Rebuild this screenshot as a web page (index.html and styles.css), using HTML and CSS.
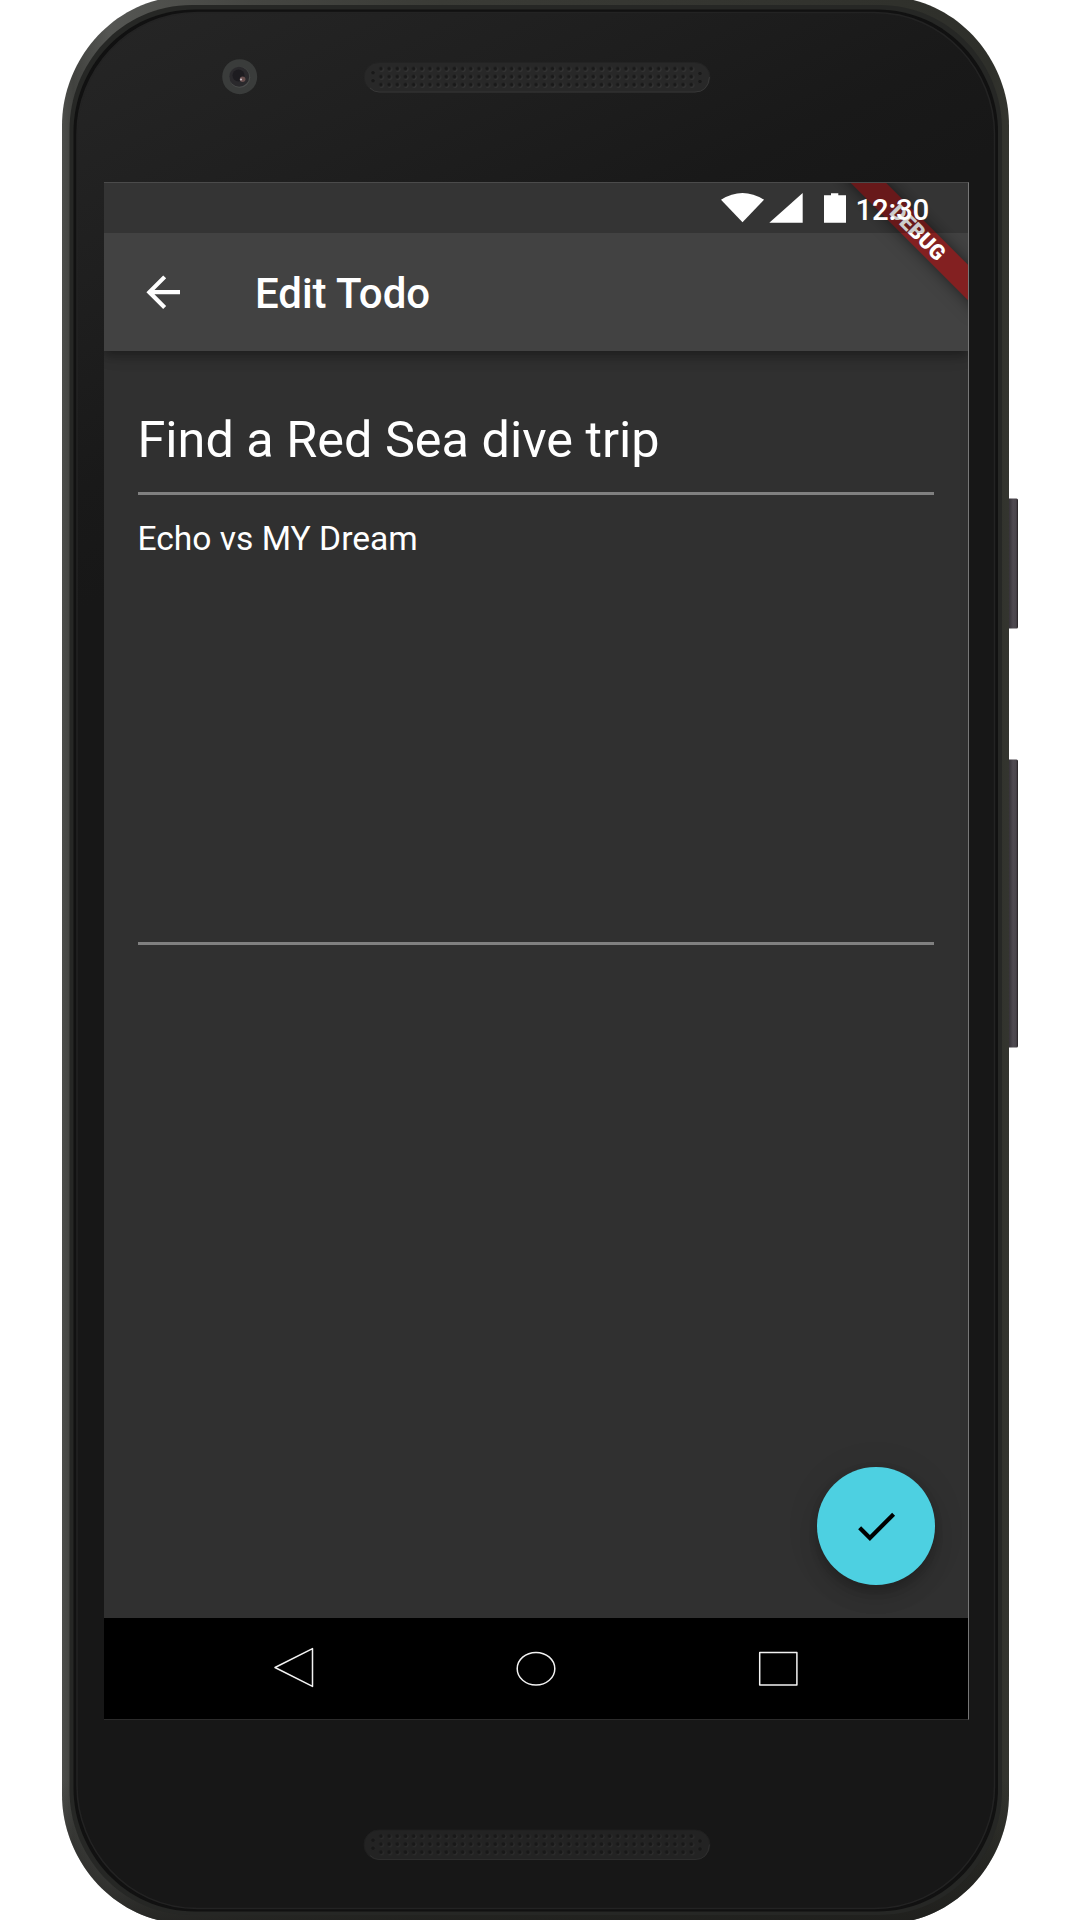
FILE: index.html
```html
<!DOCTYPE html>
<html lang="en">
<head>
<meta charset="utf-8">
<title>Edit Todo</title>
<link rel="stylesheet" href="styles.css">
</head>
<body>
<div class="device">
  <svg class="shell" viewBox="0 0 1080 1920" aria-hidden="true">
    <defs>
      <linearGradient id="metal" x1="62" x2="1009" y1="0" y2="0" gradientUnits="userSpaceOnUse">
        <stop offset="0" stop-color="#4c4d4a"/><stop offset=".012" stop-color="#41423f"/><stop offset=".05" stop-color="#555653"/><stop offset=".2" stop-color="#454642"/><stop offset=".4" stop-color="#3a3b36"/><stop offset=".98" stop-color="#2e2f2a"/><stop offset="1" stop-color="#34352f"/>
      </linearGradient>
      <linearGradient id="shade" x1="0" x2="0" y1="1780" y2="1920" gradientUnits="userSpaceOnUse">
        <stop offset="0" stop-color="#1c1c1a" stop-opacity="0"/><stop offset="1" stop-color="#1c1c1a" stop-opacity=".8"/>
      </linearGradient>
      <linearGradient id="glass" x1="80" y1="10" x2="320" y2="490" gradientUnits="userSpaceOnUse">
        <stop offset="0" stop-color="#262626"/><stop offset=".45" stop-color="#1f1f1f"/><stop offset=".8" stop-color="#191919"/><stop offset="1" stop-color="#171717"/>
      </linearGradient>
      <linearGradient id="key" x1="1009" x2="1018" y1="0" y2="0" gradientUnits="userSpaceOnUse">
        <stop offset="0" stop-color="#363238"/><stop offset=".45" stop-color="#4f4a51"/><stop offset=".8" stop-color="#4a454b"/><stop offset="1" stop-color="#211d20"/>
      </linearGradient>
      <pattern id="holes" x="377" y="64.7" width="8.166" height="8" patternUnits="userSpaceOnUse">
        <circle cx="4.6" cy="4.6" r="2.3" fill="#3a3a3a"/><circle cx="4" cy="4" r="2" fill="#191919"/>
      </pattern>
      <g id="speaker">
        <rect x="364" y="62.5" width="346" height="29.5" rx="14.7" fill="#282828" stroke="#232323"/>
        <path d="M370 88q4 4 9 4h316q13 0 14.500-15" fill="none" stroke="#383838"/>
        <rect x="377" y="64.700" width="318.500" height="24" fill="url(#holes)"/>
        <g fill="#191919" stroke="#303030" stroke-width=".6"><circle cx="373" cy="72.700" r="2.200"/><circle cx="373" cy="80.700" r="2.200"/><circle cx="700" cy="73.500" r="2.200"/><circle cx="700" cy="81.500" r="2.200"/></g>
      </g>
    </defs>
    <rect x="1005" y="498.500" width="13" height="130" rx="1.500" fill="url(#key)"/>
    <rect x="1005" y="759.500" width="13" height="288" rx="1.500" fill="url(#key)"/>
    <path d="M62 125C62 62 112-4 190-4H881C959-4 1009 62 1009 125V1795C1009 1858 959 1924 881 1924H190C112 1924 62 1858 62 1795Z" fill="url(#metal)"/>
    <path d="M62 125C62 62 112-4 190-4H881C959-4 1009 62 1009 125V1795C1009 1858 959 1924 881 1924H190C112 1924 62 1858 62 1795Z" fill="url(#shade)"/>
    <path d="M69.500 130C69.500 65 120 5 192 5H879C951 5 1002 65 1002 130V1790C1002 1855 951 1915 879 1915H192C120 1915 69.500 1855 69.500 1790Z" fill="#262725"/>
    <path d="M73.500 132C73.500 69 123 9.500 195 9.500H877C948 9.500 998 69 998 132V1788C998 1851 948 1911.500 877 1911.500H195C123 1911.500 73.500 1851 73.500 1788Z" fill="#111111"/>
    <path d="M77 134C77 72 126 12.500 198 12.500H874C945 12.500 994.500 72 994.500 134V1786C994.500 1848 945 1908.500 874 1908.500H198C126 1908.500 77 1848 77 1786Z" fill="url(#glass)" stroke="#232323" stroke-width="1.500"/>
    <circle cx="239.700" cy="76.700" r="17.500" fill="#3a3c3b"/>
    <circle cx="239.700" cy="77.300" r="10.500" fill="#4b4d4c"/>
    <circle cx="239.200" cy="76.700" r="10" fill="#2a292c"/>
    <circle cx="238.500" cy="75.500" r="6" fill="#1d1c20"/>
    <circle cx="242.600" cy="79.200" r="2.800" fill="#69504f"/>
    <circle cx="241" cy="79.500" r="1.100" fill="#c5bcc4"/>
    <use href="#speaker"/>
    <use href="#speaker" y="1767.500" opacity=".72"/>
  </svg>

  <main class="screen">
    <div class="app">
      <header class="top">
        <div class="appbar">
          <svg class="icon" viewBox="0 0 24 24"><path d="M20 11H7.830l5.590-5.590L12 4l-8 8 8 8 1.410-1.410L7.830 13H20v-2z" fill="#fff"/></svg>
          <h1 class="title">Edit Todo</h1>
        </div>
        <div class="banner">DEBUG</div>
        <div class="status">
          <svg class="signals" viewBox="0 0 126 30">
            <path d="M0 6.700Q21.500-6.700 43 6.700L21.500 29.300Z"/>
            <path d="M48.300 29.700H81.700V0Z"/>
            <path d="M103 2.300H110V.3H117.300V2.300H125V29.700H103Z"/>
          </svg>
          <span class="time">12:30</span>
        </div>
      </header>
      <section class="form">
        <div class="field field-task">Find a Red Sea dive trip</div>
        <div class="field field-note">Echo vs MY Dream</div>
      </section>
      <div class="fab">
        <svg class="icon" viewBox="0 0 24 24"><path d="M9 16.170L4.830 12l-1.420 1.410L9 19 21 7l-1.410-1.410z"/></svg>
      </div>
    </div>
    <nav class="nav">
      <svg class="keys" viewBox="0 0 864 101" fill="none" stroke="#f2f2f2" stroke-width="1.500" stroke-linejoin="round">
        <path d="M171 49.500L208.500 30.600V68.400Z"/>
        <ellipse cx="432" cy="50.700" rx="18.800" ry="16.300"/>
        <rect x="655.700" y="34.500" width="37.200" height="32.500"/>
      </svg>
    </nav>
  </main>
</div>
</body>
</html>
```

FILE: styles.css
```css
* { box-sizing: border-box; }

body {
  margin: 0;
  background: #fff;
  font-family: Roboto, "Liberation Sans", sans-serif;
  color: #fff;
}

.device {
  display: grid;
  width: 1080px;
  height: 1920px;
  overflow: hidden;
}

.shell,
.screen { grid-area: 1 / 1; }

.shell {
  width: 1080px;
  height: 1920px;
}

.screen {
  z-index: 1;
  display: flex;
  flex-direction: column;
  width: 865px;
  height: 1538px;
  margin: 182px 0 0 104px;
  border-top: 1px solid #4b4b4b;
  border-right: 1px solid #777;
  border-bottom: 1px solid #2b2b2b;
}

.app {
  position: relative;
  display: flex;
  flex-direction: column;
  flex: 1;
  overflow: hidden;
  background: #303030;
}

.top {
  position: relative;
  height: 168px;
  padding-top: 50px;
  overflow: hidden;
  background: #424242;
}

/* Elevation shadow under the app bar */
.app::before {
  content: "";
  position: absolute;
  top: 0;
  left: 0;
  right: 0;
  height: 168px;
  box-shadow: 0 4px 8px rgba(0, 0, 0, .2), 0 8px 12px rgba(0, 0, 0, .12), 0 2px 20px rgba(0, 0, 0, .1);
}

.appbar {
  display: flex;
  align-items: center;
  gap: 67px;
  height: 118px;
  padding-left: 33.5px;
}

.icon {
  width: 50.4px;
  height: 50.4px;
}

.title {
  margin: 0;
  padding-top: 3px;
  font-size: 42px;
  font-weight: 500;
  line-height: 50px;
}

/* Corner ribbon, turned about its own centre */
.banner {
  position: absolute;
  left: 714px;
  top: 37px;
  width: 200px;
  height: 25px;
  background: #832021;
  box-shadow: 0 0 16px rgba(0, 0, 0, .5);
  font-size: 21.4px;
  font-weight: 900;
  line-height: 25px;
  text-align: center;
  transform: rotate(45deg);
}

.status {
  position: absolute;
  inset: 0 0 auto;
  display: flex;
  align-items: flex-start;
  justify-content: flex-end;
  height: 50px;
  padding: 10px 39px 0 0;
  background: rgba(0, 0, 0, .2);
}

.signals {
  width: 126px;
  height: 30px;
  fill: #fff;
}

.time {
  width: 82px;
  font-size: 29.4px;
  font-weight: 500;
  line-height: 34px;
  letter-spacing: -.2px;
  text-align: right;
}

.form {
  display: flex;
  flex-direction: column;
  padding: 42px 34px 0 33.5px;
}

.field {
  border-bottom: 3px solid #808080;
}

.field-task {
  height: 102px;
  padding-top: 17px;
  font-size: 50.4px;
  line-height: 60px;
}

.field-note {
  height: 450px;
  padding-top: 23px;
  font-size: 33.6px;
  line-height: 42px;
}

.fab {
  position: absolute;
  right: 33.4px;
  bottom: 33.4px;
  display: grid;
  place-items: center;
  width: 117.6px;
  height: 117.6px;
  border-radius: 50%;
  background: #4dd0e1;
  box-shadow: 0 6px 10px rgba(0, 0, 0, .14), 0 12px 20px rgba(0, 0, 0, .12), 0 2px 36px rgba(0, 0, 0, .08);
}

.nav {
  height: 101px;
  background: #000;
}

.keys {
  display: block;
  width: 864px;
  height: 101px;
}
```
